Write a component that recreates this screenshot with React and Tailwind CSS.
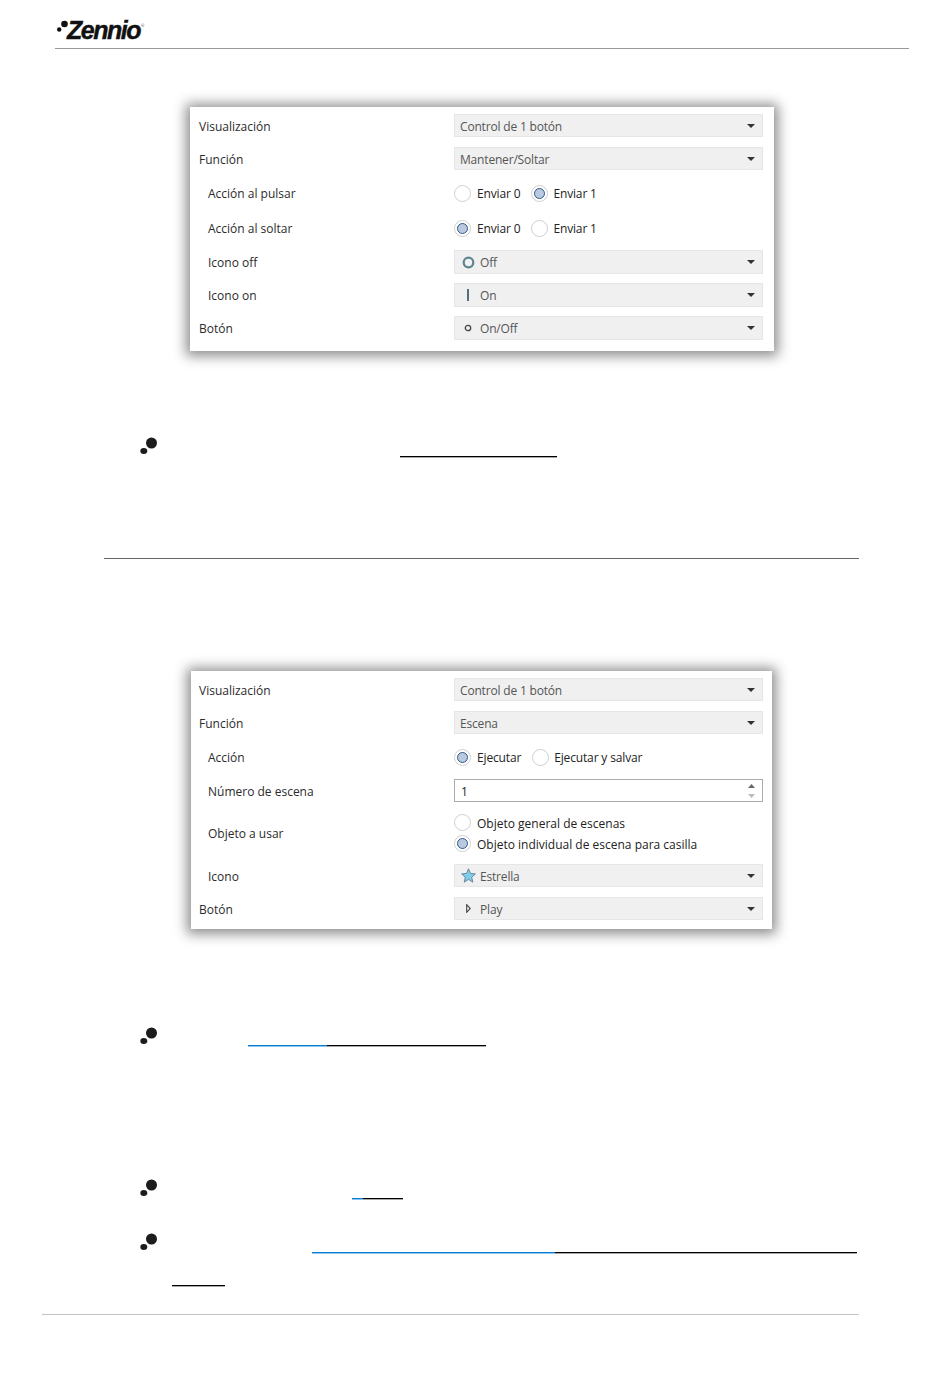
const font = "font-['Open_Sans','Noto_Sans',sans-serif]";

function Bullet() {
  return (
    <svg width="18" height="18" viewBox="0 0 18 18" className="shrink-0">
      <circle cx="11.5" cy="6" r="5.5" fill="#1c1c1c" />
      <ellipse cx="3.8" cy="14" rx="3.5" ry="3" fill="#1c1c1c" />
    </svg>
  );
}

function Arrow() {
  return (
    <svg width="8" height="4" viewBox="0 0 8 4" className="shrink-0">
      <path d="M0 0h8L4 4z" fill="#333" />
    </svg>
  );
}

function Select({ text, icon, className = "" }) {
  return (
    <div className={`flex items-center w-[309px] bg-[#f0f0f0] border border-[#e6e6e6] pr-[7px] ${className}`}>
      {icon ? (
        <div className="w-[25px] flex items-center justify-center shrink-0">{icon}</div>
      ) : (
        <div className="w-[5px] shrink-0" />
      )}
      <span className="flex-1 text-[#555] leading-none pt-[2px] tracking-[-0.18px]">{text}</span>
      <Arrow />
    </div>
  );
}

function Radio({ label, checked, second, tight, className = "" }) {
  return (
    <div className={`flex items-center ${className}`}>
      <div className="w-[17px] h-[17px] rounded-full border border-[#cfcfcf] bg-white flex items-center justify-center shrink-0">
        {checked && <div className="w-[11px] h-[11px] rounded-full bg-[#b9cade] border border-[#34588a]" />}
      </div>
      <span
        className={`text-[#222] leading-none pt-[2px] ${second ? "ml-[5px]" : "ml-[6px]"} ${tight ? "tracking-[-0.15px]" : ""}`}
      >
        {label}
      </span>
    </div>
  );
}

function Row({ label, indent, className = "", children }) {
  return (
    <div className={`flex items-center ${className}`}>
      <div className={`w-[255px] shrink-0 text-[#2b2b2b] leading-none pt-[2px] ${indent ? "pl-[9px]" : ""}`}>{label}</div>
      {children}
    </div>
  );
}

// underline of a blanked out link, with the grey pixel row below it
function BlackLine({ className = "" }) {
  return <div className={`h-[2px] bg-black border-b border-[#a8a8a8] ${className}`} />;
}

function BlueLine({ className = "" }) {
  return <div className={`h-[2px] bg-[#0a7fd2] border-b border-[#8cc4ee] ${className}`} />;
}

const Ring = () => (
  <svg width="13" height="13" viewBox="0 0 13 13" className="ml-[2px]">
    <circle cx="6.5" cy="6.5" r="4.8" fill="none" stroke="#5f8491" strokeWidth="2.2" />
  </svg>
);
const Bar = () => <div className="w-[2px] h-[12px] bg-[#54707c] ml-[1px]" />;
const SmallRing = () => (
  <svg width="8" height="8" viewBox="0 0 8 8" className="ml-[1px]">
    <circle cx="4" cy="4" r="2.7" fill="none" stroke="#444" strokeWidth="1.3" />
  </svg>
);
const Star = () => (
  <svg width="15" height="15" viewBox="0 0 15 15" className="ml-[2px]">
    <path
      d="M7.5 .8l2 4.6 4.9.5-3.7 3.3 1.1 4.9-4.3-2.6-4.3 2.6 1.1-4.9L.6 5.9l4.9-.5z"
      fill="#7fcdea"
      stroke="#5f7f8f"
      strokeWidth=".9"
      strokeLinejoin="round"
    />
  </svg>
);
const Play = () => (
  <svg width="5" height="9" viewBox="0 0 5 9" className="ml-[1px]">
    <path d="M.7 .7L4.3 4.5 .7 8.3z" fill="none" stroke="#444" strokeWidth="1.1" />
  </svg>
);

function Spinner() {
  return (
    <div className="flex flex-col gap-[6px]">
      <svg width="7" height="4" viewBox="0 0 7 4"><path d="M3.5 0L7 4H0z" fill="#666" /></svg>
      <svg width="7" height="4" viewBox="0 0 7 4"><path d="M0 0h7L3.5 4z" fill="#bbb" /></svg>
    </div>
  );
}

const panelShadow = "shadow-[0_1px_12px_4px_rgba(0,0,0,0.45)]";

export default function App() {
  return (
    <div className={`w-[950px] h-[1379px] bg-white overflow-hidden ${font} text-[12px]`}>
      {/* header */}
      <div className="ml-[55px] w-[854px] h-[49px] border-b border-[#999] flex items-end pb-[4px] pl-[2px]">
        <div className="flex items-start">
          <svg width="11" height="14" viewBox="0 0 11 14" className="mt-[4px]">
            <circle cx="7.5" cy="4" r="3.3" fill="#111" />
            <circle cx="2.2" cy="9.5" r="2.2" fill="#111" />
          </svg>
          <span className="font-['Liberation_Sans',sans-serif] font-bold italic text-[25px] leading-[28px] tracking-[-1.5px] text-[#111] -ml-[1px] [-webkit-text-stroke:0.4px_#111]">
            Zennio
          </span>
          <span className="text-[4px] leading-none text-[#555] mt-[8px] ml-[1px]">®</span>
        </div>
      </div>

      {/* primer panel */}
      <div className={`ml-[190px] mt-[58px] w-[584px] bg-white pl-[9px] pt-[7px] pb-[11px] ${panelShadow}`}>
        <Row label="Visualización" className="h-[23px]">
          <Select text="Control de 1 botón" className="h-[23px]" />
        </Row>
        <Row label="Función" className="h-[23px] mt-[10px]">
          <Select text="Mantener/Soltar" className="h-[23px]" />
        </Row>
        <Row label="Acción al pulsar" indent className="h-[22px] mt-[12px]">
          <Radio label="Enviar 0" tight />
          <Radio label="Enviar 1" checked second tight className="ml-[11px]" />
        </Row>
        <Row label="Acción al soltar" indent className="h-[22px] mt-[13px]">
          <Radio label="Enviar 0" checked tight />
          <Radio label="Enviar 1" second tight className="ml-[11px]" />
        </Row>
        <Row label="Icono off" indent className="h-[24px] mt-[11px]">
          <Select text="Off" icon={<Ring />} className="h-[24px]" />
        </Row>
        <Row label="Icono on" indent className="h-[24px] mt-[9px]">
          <Select text="On" icon={<Bar />} className="h-[24px]" />
        </Row>
        <Row label="Botón" className="h-[24px] mt-[9px]">
          <Select text="On/Off" icon={<SmallRing />} className="h-[24px]" />
        </Row>
      </div>

      <div className="flex items-start ml-[140px] mt-[86px] h-[20px]">
        <Bullet />
        <BlackLine className="ml-[242px] mt-[19px] w-[157px]" />
      </div>

      <div className="ml-[104px] mt-[101px] w-[755px] h-px bg-[#666]" />

      {/* segundo panel */}
      <div className={`ml-[191px] mt-[112px] w-[581px] bg-white pl-[8px] pt-[7px] pb-[9px] ${panelShadow}`}>
        <Row label="Visualización" className="h-[23px]">
          <Select text="Control de 1 botón" className="h-[23px]" />
        </Row>
        <Row label="Función" className="h-[23px] mt-[10px]">
          <Select text="Escena" className="h-[23px]" />
        </Row>
        <Row label="Acción" indent className="h-[22px] mt-[12px]">
          <Radio label="Ejecutar" checked tight />
          <Radio label="Ejecutar y salvar" second tight className="ml-[11px]" />
        </Row>
        <Row label="Número de escena" indent className="h-[23px] mt-[11px]">
          <div className="flex items-center justify-between w-[309px] h-[23px] bg-white border border-[#ababab] pl-[6px] pr-[7px]">
            <span className="text-[#222] leading-none pt-[2px]">1</span>
            <Spinner />
          </div>
        </Row>
        <Row label="Objeto a usar" indent className="h-[42px] mt-[10px]">
          <div className="flex flex-col">
            <Radio label="Objeto general de escenas" className="h-[21px]" />
            <Radio label="Objeto individual de escena para casilla" checked className="h-[21px]" />
          </div>
        </Row>
        <Row label="Icono" indent className="h-[23px] mt-[10px]">
          <Select text="Estrella" icon={<Star />} className="h-[23px]" />
        </Row>
        <Row label="Botón" className="h-[23px] mt-[10px]">
          <Select text="Play" icon={<Play />} className="h-[23px]" />
        </Row>
      </div>

      <div className="flex items-start ml-[140px] mt-[98px] h-[19px]">
        <Bullet />
        <BlueLine className="ml-[90px] mt-[18px] w-[79px]" />
        <BlackLine className="mt-[18px] w-[159px]" />
      </div>

      <div className="flex items-start ml-[140px] mt-[133px] h-[20px]">
        <Bullet />
        <BlueLine className="ml-[194px] mt-[19px] w-[11px]" />
        <BlackLine className="mt-[19px] w-[40px]" />
      </div>

      <div className="flex items-start ml-[140px] mt-[34px] h-[20px]">
        <Bullet />
        <BlueLine className="ml-[154px] mt-[19px] w-[243px]" />
        <BlackLine className="mt-[19px] w-[302px]" />
      </div>

      <BlackLine className="ml-[172px] mt-[32px] w-[53px]" />

      <div className="ml-[42px] mt-[27px] w-[817px] h-px bg-[#c4c4c4]" />
    </div>
  );
}
